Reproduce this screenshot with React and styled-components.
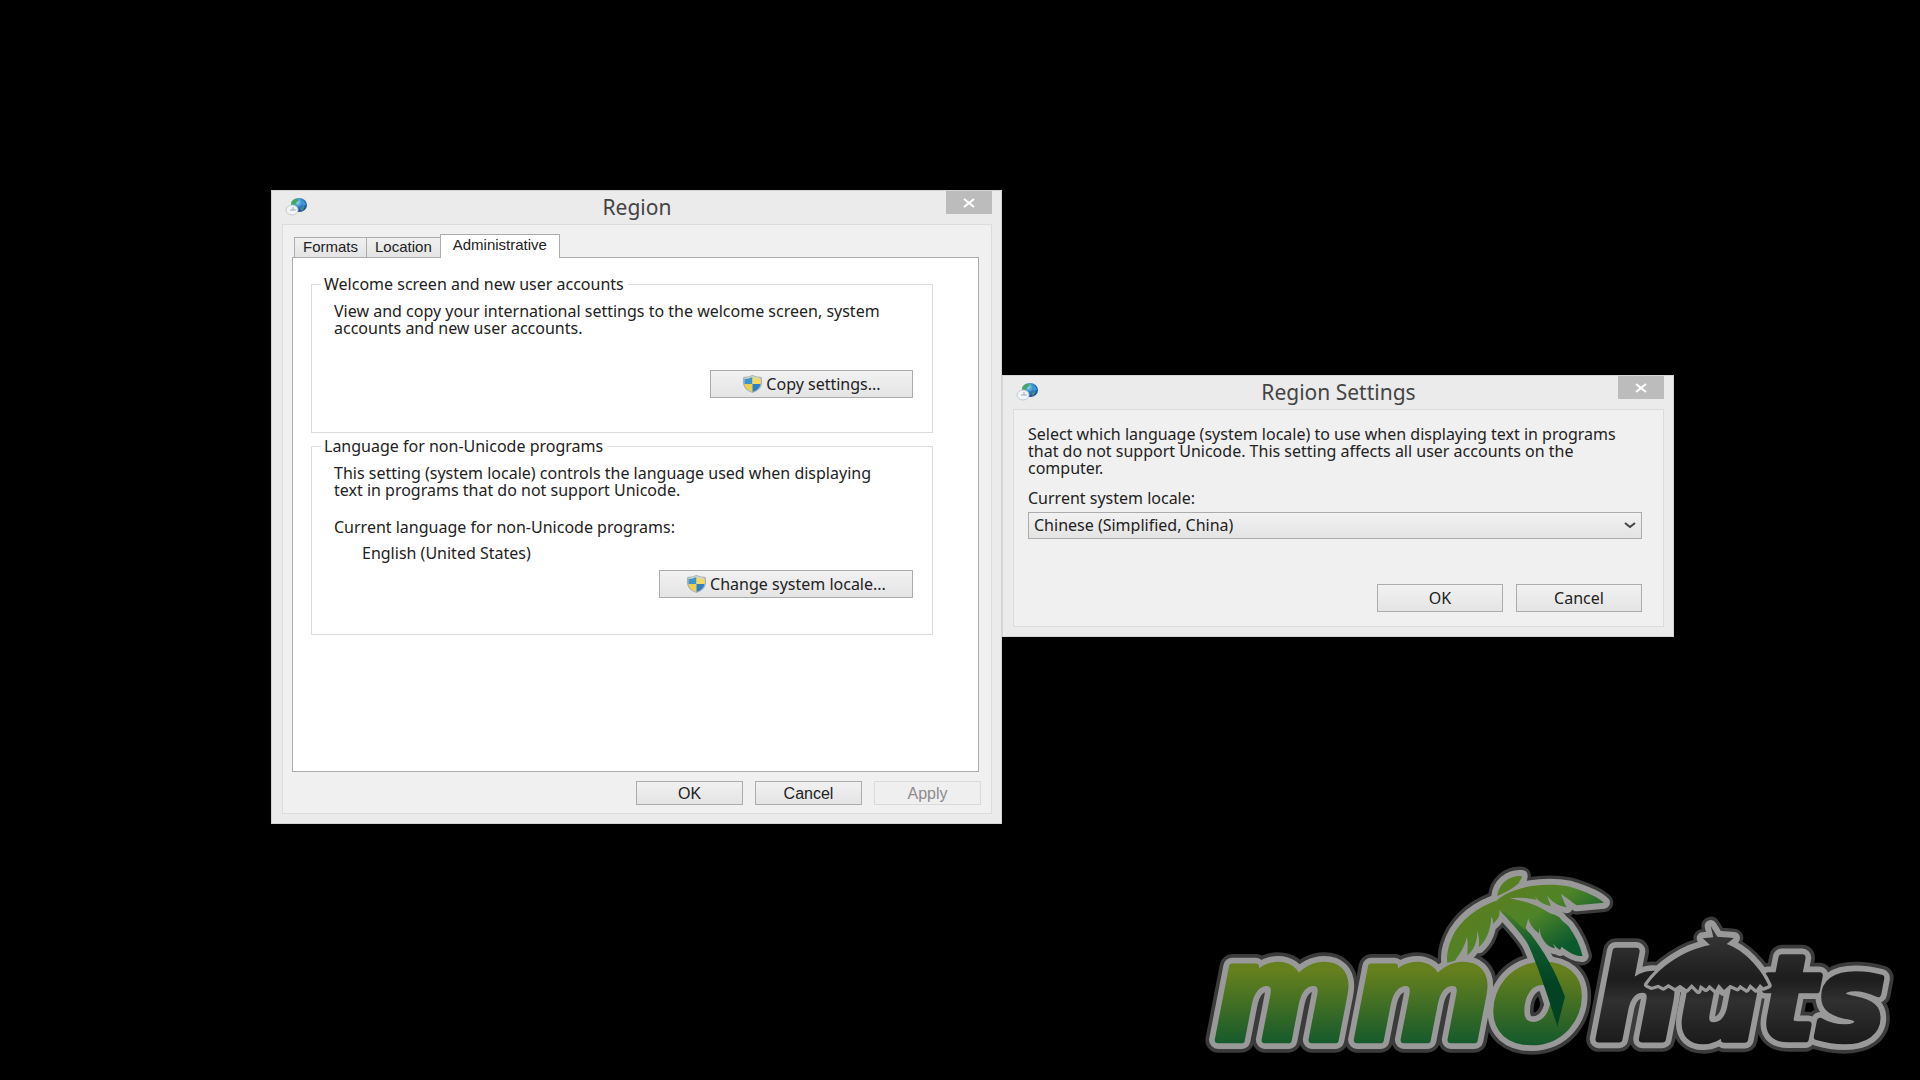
import styled, { createGlobalStyle } from 'styled-components';
import { useState } from 'react';

const GlobalStyle = createGlobalStyle`
    * {
        box-sizing: border-box;
    }

    body {
        margin: 0;
        background: #000;
        color: #222;
        font-family: 'Noto Sans', 'Open Sans', sans-serif;
        font-size: 16px;
        line-height: 17px;
    }
`

const Desktop = styled.main`
    position: relative;
    min-height: 100vh;
    padding-top: 190px;
    display: grid;
    grid-template-columns: 271fr 731fr 672fr 246fr;
    align-items: start;
`

const Window = styled.section`
    grid-column: ${props => props.$column};
    margin-top: ${props => props.$drop || 0}px;
    padding: 0 9px 9px 10px;
    background: #ebebeb;
    border: 1px solid #d4d4d4;
`

const TitleBar = styled.header`
    height: 33px;
    display: grid;
    grid-template-columns: 46px 1fr 46px;
    align-items: start;

    h1 {
        margin: 0;
        font-size: 21px;
        font-weight: 400;
        line-height: 33px;
        text-align: center;
        color: #444;
    }

    > svg {
        margin: 6px 0 0 3px;
    }
`

const CloseButton = styled.button`
    height: 23px;
    padding: 0;
    border: 0;
    background: #bcbcbc;
    display: flex;
    align-items: center;
    justify-content: center;
`

const Frame = styled.div`
    padding: ${props => props.$pad};
    background: #f0f0f0;
    border: 1px solid #dcdcdc;
`

const TabList = styled.div`
    display: flex;
    align-items: flex-end;
    padding-left: 2px;
`

const Tab = styled.button`
    height: ${props => props.$active ? 24 : 20}px;
    margin-right: ${props => props.$active ? 0 : -1}px;
    margin-bottom: ${props => props.$active ? -1 : 0}px;
    padding: ${props => props.$active ? '0 12px 4px' : '0 8px 2px'};
    z-index: ${props => props.$active ? 1 : 0};
    border: 1px solid #acacac;
    border-bottom: 0;
    background: ${props => props.$active ? '#fff' : 'linear-gradient(#f0f0f0, #e4e4e4)'};
    color: #222;
    font-family: 'Liberation Sans', sans-serif;
    font-size: 15px;
    line-height: 17px;
`

const TabPanel = styled.div`
    min-height: 515px;
    margin-right: 2px;
    padding: 17px 45px 0 18px;
    background: #fff;
    border: 1px solid #acacac;
`

const Group = styled.fieldset`
    min-width: 0;
    min-height: ${props => props.$height}px;
    margin: 0 0 4px;
    padding: 10px 19px 0 22px;
    border: 1px solid #dcdcdc;
    display: flex;
    flex-direction: column;

    legend {
        margin-left: -13px;
        padding: 0 4px 0 3px;
        line-height: 18px;
    }

    p {
        padding-right: 16px;
    }
`

const Text = styled.p`
    margin: ${props => props.$gap || 0}px 0 0 ${props => props.$indent || 0}px;
`

const Label = styled.label`
    display: block;
    margin-top: 13px;
`

const Button = styled.button`
    min-width: ${props => props.$width}px;
    height: ${props => props.$tall ? 28 : 24}px;
    padding: 0;
    display: flex;
    align-items: center;
    justify-content: center;
    gap: 3px;
    border: 1px solid #acacac;
    background: linear-gradient(#f1f1f1, #e4e4e4);
    color: #222;
    font-family: ${props => props.$plain ? "'Liberation Sans', sans-serif" : 'inherit'};
    font-size: 16px;
    line-height: 17px;

    &:disabled {
        border-color: #dadada;
        background: #efefef;
        color: #8c8c8c;
    }
`

const GroupAction = styled.div`
    margin-top: ${props => props.$gap}px;
    display: flex;
    justify-content: flex-end;
`

const ButtonRow = styled.div`
    margin-top: ${props => props.$top}px;
    display: flex;
    justify-content: flex-end;
    gap: ${props => props.$gap}px;
`

const SelectBox = styled.div`
    position: relative;
    margin-top: 5px;

    select {
        width: 100%;
        height: 27px;
        padding: 0 28px 0 5px;
        appearance: none;
        border: 1px solid #acacac;
        border-radius: 0;
        background: linear-gradient(#f1f1f1, #e4e4e4);
        color: #222;
        font: inherit;
    }

    svg {
        position: absolute;
        right: 6px;
        top: 9px;
        pointer-events: none;
    }
`

const Watermark = styled.div`
    position: absolute;
    right: 10px;
    bottom: 0;
    line-height: 0;

    text {
        font-family: 'DejaVu Sans', sans-serif;
        font-weight: 700;
        font-style: italic;
    }
`

function GlobeIcon() {
    return (
        <svg width="24" height="20" viewBox="0 0 24 20" aria-hidden="true">
            <defs>
                <radialGradient id="globe" cx="0.4" cy="0.3" r="0.7">
                    <stop offset="0" stopColor="#8fdcf2" />
                    <stop offset="0.5" stopColor="#2f80c8" />
                    <stop offset="1" stopColor="#1c3f8c" />
                </radialGradient>
            </defs>
            <ellipse cx="14" cy="8" rx="8" ry="7" fill="url(#globe)" />
            <path d="M6 6c1-3 4-5 7-4 1 2-1 3-2 4s-1 3-3 3z" fill="#46a564" />
            <path d="M17 3c2 1 4 3 4 5l-3 1-2-3z" fill="#3f97cf" />
            <path d="M15 12l3-3 2 1-3 4z" fill="#3d8f8a" />
            <ellipse cx="7" cy="13" rx="6" ry="5" fill="#f1f5f7" stroke="#c3ccd2" />
            <path d="M8 10v3h3M5 13h3" fill="none" stroke="#9aabba" />
        </svg>
    )
}

function ShieldIcon() {
    return (
        <svg width="21" height="18" viewBox="0 0 20 18" aria-hidden="true">
            <path d="M10 0c3 1 6 2 9 2 2 8-1 13-9 16C2 15-1 10 1 2c3 0 6-1 9-2z" fill="#a4afb0" />
            <path d="M10 1c3 1 5 1 8 2 1 7-1 11-8 14C3 14 1 10 2 3c3-1 5-1 8-2z" fill="#cfd8d6" />
            <path d="M10 2v7H2V4c3 0 5-1 8-2z" fill="#3f93cd" />
            <path d="M10 2v7h8V4c-3 0-5-1-8-2z" fill="#f4d95e" />
            <path d="M10 9v8c-5-2-7-4-8-8z" fill="#f1cf4c" />
            <path d="M10 9v8c5-2 7-4 8-8z" fill="#2f80c0" />
        </svg>
    )
}

function CloseIcon() {
    return (
        <svg width="12" height="10" viewBox="0 0 12 10" aria-hidden="true">
            <path d="M1 1l10 8M11 1L1 9" stroke="#fff" strokeWidth="2" />
        </svg>
    )
}

const palm = [
    'M892 138C895 105 925 75 965 78C966 90 955 94 958 98C940 115 920 125 892 138Z',
    'M930 140C860 155 800 190 765 245C748 275 738 310 742 338L765 332C780 310 795 290 800 262C806 280 802 300 802 316C822 300 832 275 832 242C838 262 838 275 836 292C856 275 872 245 874 200C880 210 880 216 878 222C890 212 902 200 898 180L960 200Z',
    'M890 150C940 110 1030 95 1110 110C1160 125 1200 145 1212 158L1130 166C1115 155 1095 140 1083 132C1088 145 1092 158 1100 172C1070 168 1050 150 1040 135C1045 150 1050 158 1052 168C1030 165 1010 150 1003 135L1010 150C980 142 950 143 930 145Z',
    'M920 143C985 155 1010 165 1050 190C1070 195 1085 205 1082 208L1105 228C1125 255 1140 285 1148 318C1130 320 1110 310 1085 290L1080 300C1062 290 1052 270 1050 255L1065 295C1040 290 1020 265 1017 230L1017 250C1000 240 985 215 985 205L975 240L900 170Z',
]

const trunk = 'M898 180L960 190C965 220 975 235 990 250C1030 300 1065 360 1095 440L1072 530C1045 440 1010 340 985 285C965 250 930 215 898 180Z'

const hut = 'M1342 404C1380 350 1450 300 1530 285L1508 265L1540 262L1532 228L1552 260L1602 264L1580 282C1630 300 1680 350 1705 406L1690 412L1680 402L1668 418L1650 402L1640 418L1620 404L1612 414L1590 404L1572 420L1556 402L1546 420L1528 404L1518 416L1500 404L1495 422L1475 402L1460 418L1440 404L1425 414L1405 402L1390 412L1375 404L1355 410Z'

function Letters({ mmo, huts, width }) {
    return (
        <g strokeWidth={width} strokeLinejoin="round">
            <text x="42" y="570" fontSize="400" fill={mmo} stroke={mmo}>mmo</text>
            <text x="1186" y="568" fontSize="348" fill={huts} stroke={huts}>huts</text>
        </g>
    )
}

function Drawings({ outline, width }) {
    return (
        <g stroke={outline} strokeWidth={width} strokeLinejoin="round">
            <path d={trunk} fill={outline || 'url(#trunk)'} />
            {palm.map(d => <path d={d} fill={outline || 'url(#leaf)'} key={d} />)}
            <path d={hut} fill={outline || 'url(#coal)'} />
        </g>
    )
}

function Logo() {
    return (
        <svg width="710" height="220" viewBox="0 30 2130 660" role="img" aria-label="mmohuts">
            <defs>
                <linearGradient id="grass" gradientUnits="userSpaceOnUse" x1="0" y1="360" x2="0" y2="580">
                    <stop offset="0" stopColor="#66801d" />
                    <stop offset="1" stopColor="#165a2c" />
                </linearGradient>
                <linearGradient id="leaf" gradientUnits="userSpaceOnUse" x1="960" y1="120" x2="1080" y2="300">
                    <stop offset="0" stopColor="#587f22" />
                    <stop offset="0.4" stopColor="#4f8428" />
                    <stop offset="1" stopColor="#0b5a2e" />
                </linearGradient>
                <linearGradient id="trunk" gradientUnits="userSpaceOnUse" x1="0" y1="180" x2="0" y2="400">
                    <stop offset="0" stopColor="#4d7f28" />
                    <stop offset="0.5" stopColor="#0e592d" />
                    <stop offset="1" stopColor="#034324" />
                </linearGradient>
                <linearGradient id="coal" gradientUnits="userSpaceOnUse" x1="0" y1="260" x2="0" y2="580">
                    <stop offset="0" stopColor="#343434" />
                    <stop offset="0.4" stopColor="#1d1d1d" />
                    <stop offset="0.6" stopColor="#303030" />
                    <stop offset="1" stopColor="#1b1b1b" />
                </linearGradient>
            </defs>
            <Letters mmo="#3b3b3b" huts="#3b3b3b" width={76} />
            <Drawings outline="#3b3b3b" width={56} />
            <Letters mmo="#999" huts="#999" width={54} />
            <Drawings outline="#999" width={36} />
            <Letters mmo="url(#grass)" huts="url(#coal)" width={20} />
            <path d={hut} fill="#999" stroke="#999" strokeWidth="20" strokeLinejoin="round" />
            <Drawings />
        </svg>
    )
}

function DialogTitle({ children }) {
    return (
        <TitleBar>
            <GlobeIcon />
            <h1>{children}</h1>
            <CloseButton aria-label="Close"><CloseIcon /></CloseButton>
        </TitleBar>
    )
}

function RegionWindow() {
    const [tab, setTab] = useState('Administrative');

    return (
        <Window $column={2}>
            <DialogTitle>Region</DialogTitle>
            <Frame $pad="9px 10px 8px 9px">
                <TabList role="tablist">
                    {['Formats', 'Location', 'Administrative'].map(name => (
                        <Tab role="tab" aria-selected={tab === name} $active={tab === name} onClick={() => setTab(name)} key={name}>
                            {name}
                        </Tab>
                    ))}
                </TabList>
                <TabPanel role="tabpanel">
                    <Group $height={158}>
                        <legend>Welcome screen and new user accounts</legend>
                        <Text>View and copy your international settings to the welcome screen, system accounts and new user accounts.</Text>
                        <GroupAction $gap={33}>
                            <Button $width={203} $tall><ShieldIcon />Copy settings...</Button>
                        </GroupAction>
                    </Group>
                    <Group $height={198}>
                        <legend>Language for non-Unicode programs</legend>
                        <Text>This setting (system locale) controls the language used when displaying text in programs that do not support Unicode.</Text>
                        <Text $gap={20}>Current language for non-Unicode programs:</Text>
                        <Text $gap={9} $indent={28}>English (United States)</Text>
                        <GroupAction $gap={8}>
                            <Button $width={254} $tall><ShieldIcon />Change system locale...</Button>
                        </GroupAction>
                    </Group>
                </TabPanel>
                <ButtonRow $top={9} $gap={12}>
                    <Button $width={107} $plain>OK</Button>
                    <Button $width={107} $plain>Cancel</Button>
                    <Button $width={107} $plain disabled>Apply</Button>
                </ButtonRow>
            </Frame>
        </Window>
    )
}

function SettingsWindow() {
    return (
        <Window $column={3} $drop={185}>
            <DialogTitle>Region Settings</DialogTitle>
            <Frame $pad="16px 21px 14px 14px">
                <Text>Select which language (system locale) to use when displaying text in programs that do not support Unicode. This setting affects all user accounts on the computer.</Text>
                <Label htmlFor="locale">Current system locale:</Label>
                <SelectBox>
                    <select id="locale">
                        <option>Chinese (Simplified, China)</option>
                    </select>
                    <svg width="12" height="9" viewBox="0 0 12 9" aria-hidden="true">
                        <path d="M1 2l5 4 5-4" fill="none" stroke="#444" strokeWidth="2" />
                    </svg>
                </SelectBox>
                <ButtonRow $top={45} $gap={13}>
                    <Button $width={126} $tall>OK</Button>
                    <Button $width={126} $tall>Cancel</Button>
                </ButtonRow>
            </Frame>
        </Window>
    )
}

function App() {
    return (
        <>
            <GlobalStyle />
            <Desktop>
                <RegionWindow />
                <SettingsWindow />
                <Watermark><Logo /></Watermark>
            </Desktop>
        </>
    )
}

export default App;
